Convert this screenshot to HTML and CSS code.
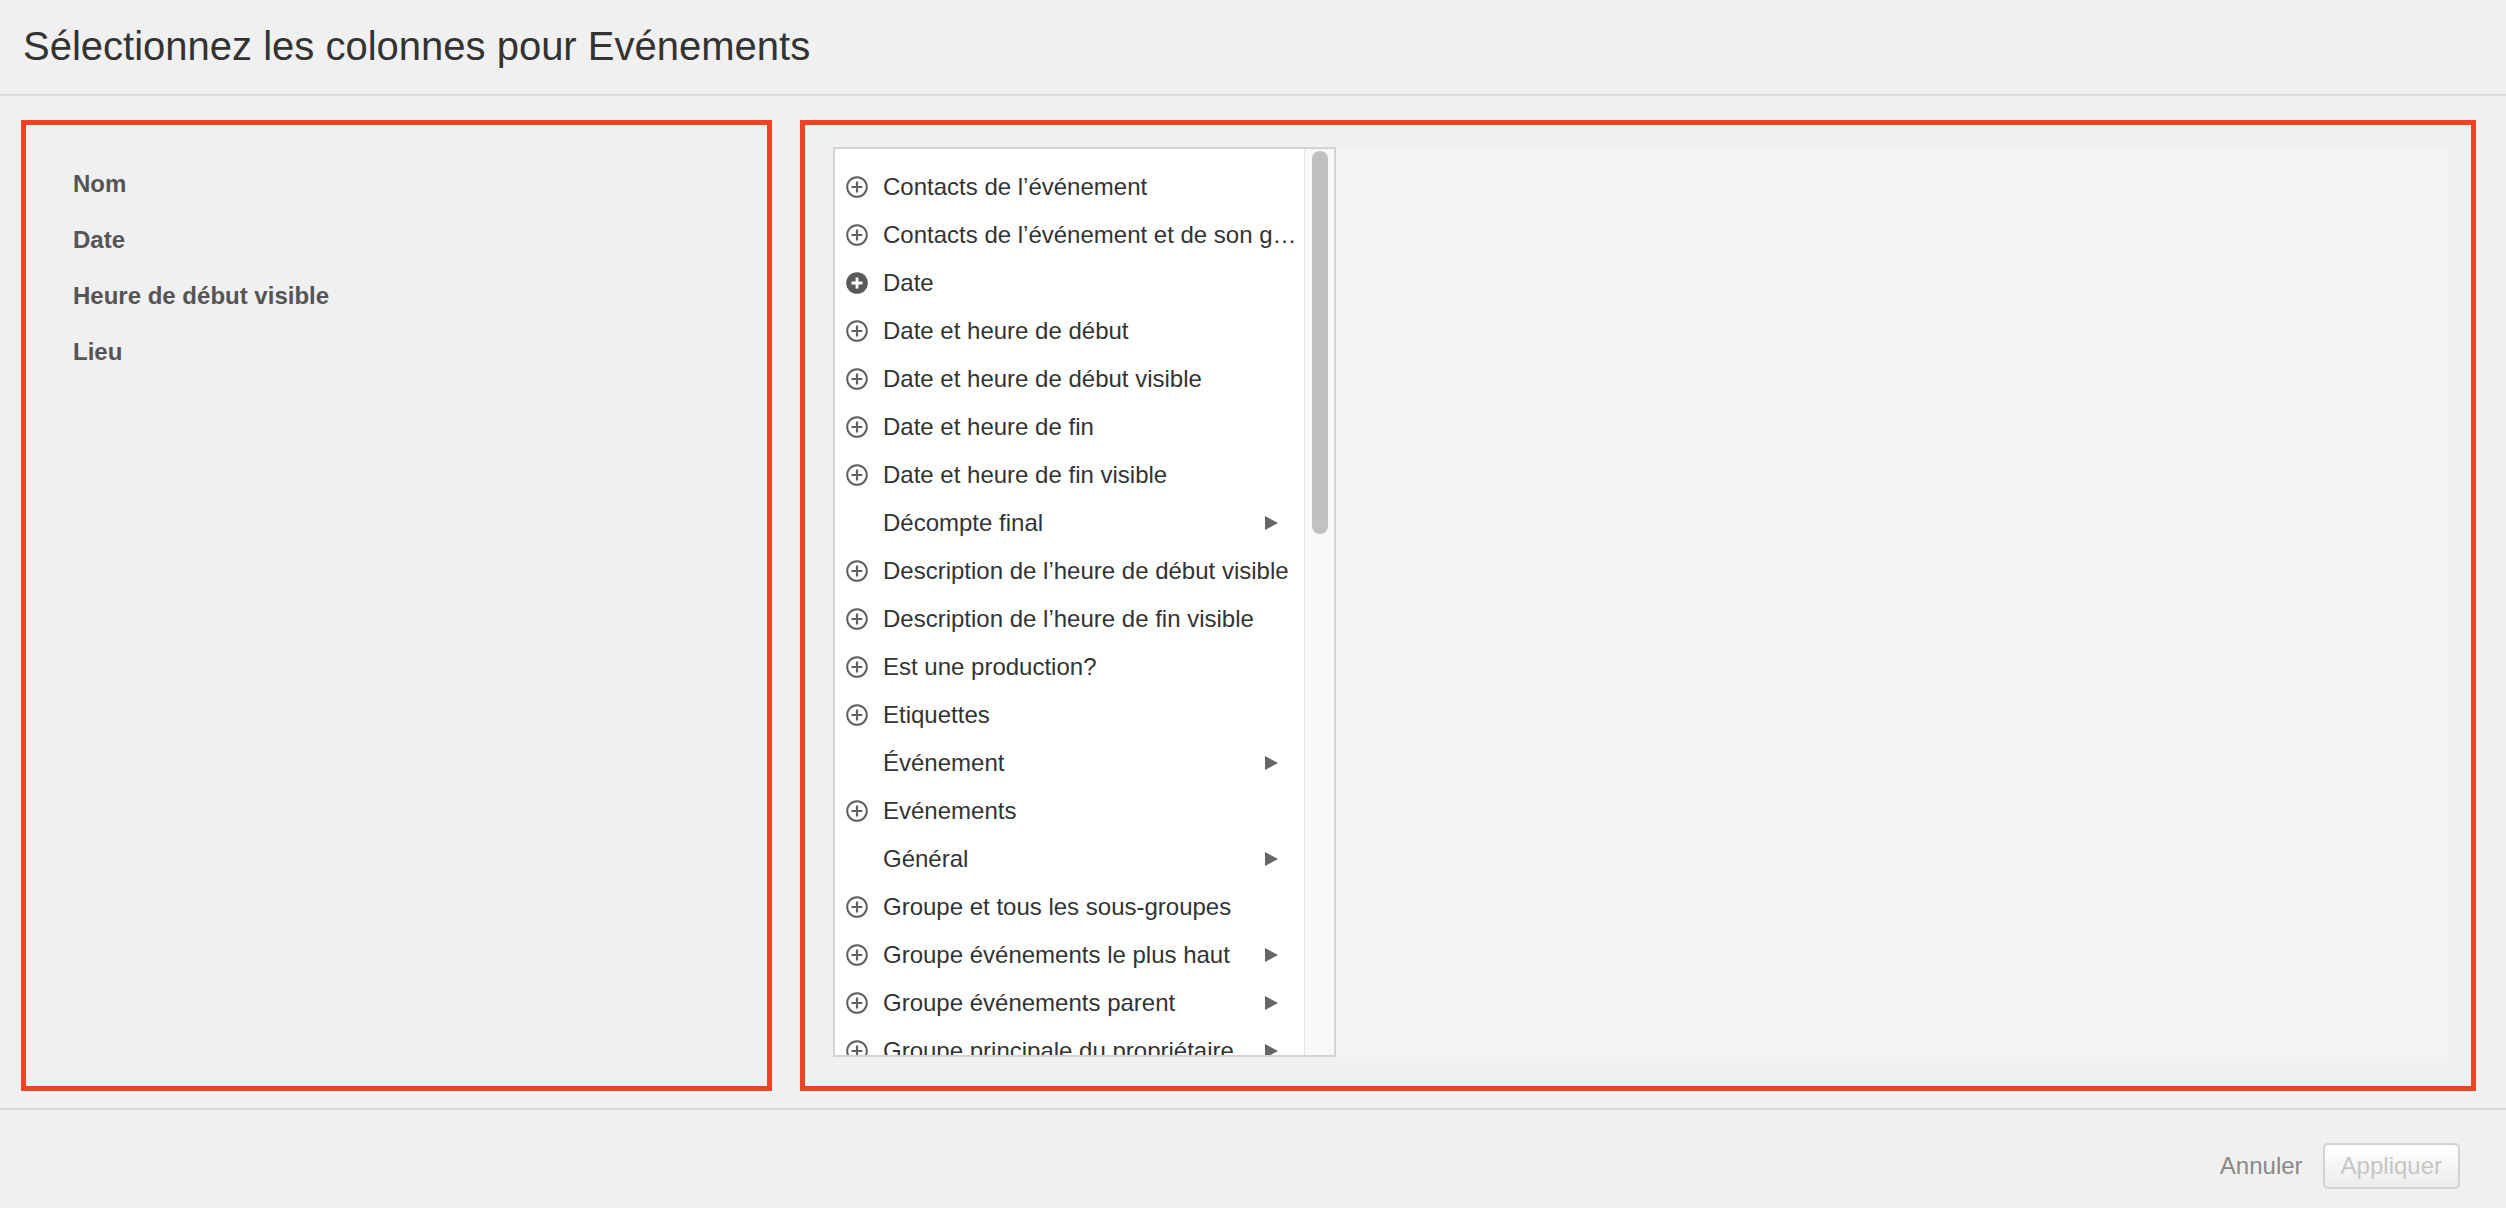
FILE: index.html
```html
<!DOCTYPE html>
<html lang="fr">
<head>
<meta charset="utf-8">
<title>Sélectionnez les colonnes pour Evénements</title>
<link rel="stylesheet" href="styles.css">
</head>
<body>
<div class="dialog">
  <header class="dlg-header">
    <h1 class="dlg-title">Sélectionnez les colonnes pour Evénements</h1>
  </header>
  <main class="dlg-main">
    <section class="box box-left">
      <ul class="selected">
        <li>Nom</li>
        <li>Date</li>
        <li>Heure de début visible</li>
        <li>Lieu</li>
      </ul>
    </section>
    <section class="box box-right">
      <div class="picker">
        <div class="list">
          <div class="items">
            <div class="item"><svg class="ic" viewBox="0 0 22 22"><circle cx="11" cy="11" r="9.8"/><path d="M11 5.5v11M5.5 11h11"/></svg><span class="txt">Contacts de l’événement</span></div>
            <div class="item"><svg class="ic" viewBox="0 0 22 22"><circle cx="11" cy="11" r="9.8"/><path d="M11 5.5v11M5.5 11h11"/></svg><span class="txt">Contacts de l’événement et de son groupe</span></div>
            <div class="item"><svg class="ic ic-fill" viewBox="0 0 22 22"><circle cx="11" cy="11" r="10.8"/><path d="M11 5.5v11M5.5 11h11"/></svg><span class="txt">Date</span></div>
            <div class="item"><svg class="ic" viewBox="0 0 22 22"><circle cx="11" cy="11" r="9.8"/><path d="M11 5.5v11M5.5 11h11"/></svg><span class="txt">Date et heure de début</span></div>
            <div class="item"><svg class="ic" viewBox="0 0 22 22"><circle cx="11" cy="11" r="9.8"/><path d="M11 5.5v11M5.5 11h11"/></svg><span class="txt">Date et heure de début visible</span></div>
            <div class="item"><svg class="ic" viewBox="0 0 22 22"><circle cx="11" cy="11" r="9.8"/><path d="M11 5.5v11M5.5 11h11"/></svg><span class="txt">Date et heure de fin</span></div>
            <div class="item"><svg class="ic" viewBox="0 0 22 22"><circle cx="11" cy="11" r="9.8"/><path d="M11 5.5v11M5.5 11h11"/></svg><span class="txt">Date et heure de fin visible</span></div>
            <div class="item"><span class="ic-blank"></span><span class="txt">Décompte final</span><span class="arrow"></span></div>
            <div class="item"><svg class="ic" viewBox="0 0 22 22"><circle cx="11" cy="11" r="9.8"/><path d="M11 5.5v11M5.5 11h11"/></svg><span class="txt">Description de l’heure de début visible</span></div>
            <div class="item"><svg class="ic" viewBox="0 0 22 22"><circle cx="11" cy="11" r="9.8"/><path d="M11 5.5v11M5.5 11h11"/></svg><span class="txt">Description de l’heure de fin visible</span></div>
            <div class="item"><svg class="ic" viewBox="0 0 22 22"><circle cx="11" cy="11" r="9.8"/><path d="M11 5.5v11M5.5 11h11"/></svg><span class="txt">Est une production?</span></div>
            <div class="item"><svg class="ic" viewBox="0 0 22 22"><circle cx="11" cy="11" r="9.8"/><path d="M11 5.5v11M5.5 11h11"/></svg><span class="txt">Etiquettes</span></div>
            <div class="item"><span class="ic-blank"></span><span class="txt">Événement</span><span class="arrow"></span></div>
            <div class="item"><svg class="ic" viewBox="0 0 22 22"><circle cx="11" cy="11" r="9.8"/><path d="M11 5.5v11M5.5 11h11"/></svg><span class="txt">Evénements</span></div>
            <div class="item"><span class="ic-blank"></span><span class="txt">Général</span><span class="arrow"></span></div>
            <div class="item"><svg class="ic" viewBox="0 0 22 22"><circle cx="11" cy="11" r="9.8"/><path d="M11 5.5v11M5.5 11h11"/></svg><span class="txt">Groupe et tous les sous-groupes</span></div>
            <div class="item"><svg class="ic" viewBox="0 0 22 22"><circle cx="11" cy="11" r="9.8"/><path d="M11 5.5v11M5.5 11h11"/></svg><span class="txt">Groupe événements le plus haut</span><span class="arrow"></span></div>
            <div class="item"><svg class="ic" viewBox="0 0 22 22"><circle cx="11" cy="11" r="9.8"/><path d="M11 5.5v11M5.5 11h11"/></svg><span class="txt">Groupe événements parent</span><span class="arrow"></span></div>
            <div class="item"><svg class="ic" viewBox="0 0 22 22"><circle cx="11" cy="11" r="9.8"/><path d="M11 5.5v11M5.5 11h11"/></svg><span class="txt">Groupe principale du propriétaire</span><span class="arrow"></span></div>
          </div>
          <div class="scrollbar"><div class="thumb"></div></div>
        </div>
        <div class="panel"></div>
      </div>
    </section>
  </main>
  <footer class="dlg-footer">
    <button class="btn-link" type="button">Annuler</button>
    <button class="btn" type="button" disabled>Appliquer</button>
  </footer>
</div>
</body>
</html>
```

FILE: styles.css
```css
* { box-sizing: border-box; }

html, body {
  margin: 0;
  padding: 0;
  height: 100%;
}

body {
  background: #f0f0f0;
  font-family: "Liberation Sans", Arial, Helvetica, sans-serif;
  color: #333;
  overflow: hidden;
}

.dialog {
  width: 2506px;
  height: 1208px;
  display: flex;
  flex-direction: column;
}

.dlg-header {
  padding: 23px 0 25px 23px;
  border-bottom: 2px solid #d9d9d9;
}

.dlg-title {
  margin: 0;
  font-size: 40px;
  line-height: 46px;
  font-weight: normal;
  color: #333;
}

.dlg-main {
  display: flex;
  gap: 28px;
  padding: 24px 30px 17px 21px;
  height: 1012px;
}

.box {
  border: 5px solid #ec4427;
  height: 971px;
}

.box-left {
  width: 751px;
  padding: 31px 0 0 47px;
}

.selected {
  list-style: none;
  margin: 0;
  padding: 0;
}

.selected li {
  font-size: 24px;
  line-height: 56px;
  font-weight: bold;
  color: #555;
}

.box-right {
  flex: 1;
  padding: 22px 23px 29px 28px;
}

.picker {
  display: flex;
  height: 100%;
}

.list {
  width: 503px;
  height: 100%;
  display: flex;
  border: 2px solid #d3d3d3;
  background: #fff;
}

.items {
  flex: 1;
  min-width: 0;
  overflow: hidden;
  padding-top: 14px;
}

.item {
  display: flex;
  align-items: center;
  height: 48px;
  padding: 0 6px 0 11px;
  font-size: 24px;
  color: #333;
  white-space: nowrap;
}

.ic, .ic-blank {
  flex: none;
  width: 22px;
  height: 22px;
  margin-right: 15px;
}

.ic circle {
  fill: none;
  stroke: #606060;
  stroke-width: 2;
}

.ic path {
  stroke: #606060;
  stroke-width: 2.2;
  fill: none;
}

.ic-fill circle {
  fill: #5a5a5a;
  stroke: none;
}

.ic-fill path {
  stroke: #fff;
  stroke-width: 2.8;
}

.txt {
  flex: 1;
  min-width: 0;
  overflow: hidden;
  text-overflow: ellipsis;
  line-height: 48px;
}

.arrow {
  flex: none;
  width: 0;
  height: 0;
  margin: 0 20px 0 10px;
  border-top: 7px solid transparent;
  border-bottom: 7px solid transparent;
  border-left: 13px solid #666;
}

.scrollbar {
  flex: none;
  width: 30px;
  background: #f8f8f8;
  border-left: 1px solid #e6e6e6;
  padding: 2px 0 0 7px;
}

.thumb {
  width: 16px;
  height: 383px;
  border-radius: 8px;
  background: #c1c1c1;
}

.panel {
  flex: 1;
  background: #f4f4f4;
}

.dlg-footer {
  flex: 1;
  border-top: 2px solid #d9d9d9;
  display: flex;
  justify-content: flex-end;
  align-items: flex-start;
  gap: 20px;
  padding: 33px 46px 0 0;
}

.btn-link {
  font-family: inherit;
  font-size: 24px;
  line-height: 46px;
  height: 46px;
  padding: 0;
  border: none;
  background: none;
  color: #888;
}

.btn {
  font-family: inherit;
  font-size: 24px;
  height: 46px;
  padding: 0 16px;
  border: 2px solid #d2d2d2;
  border-radius: 5px;
  background: linear-gradient(#ffffff, #ececec);
  color: #c6c6c6;
}
```
